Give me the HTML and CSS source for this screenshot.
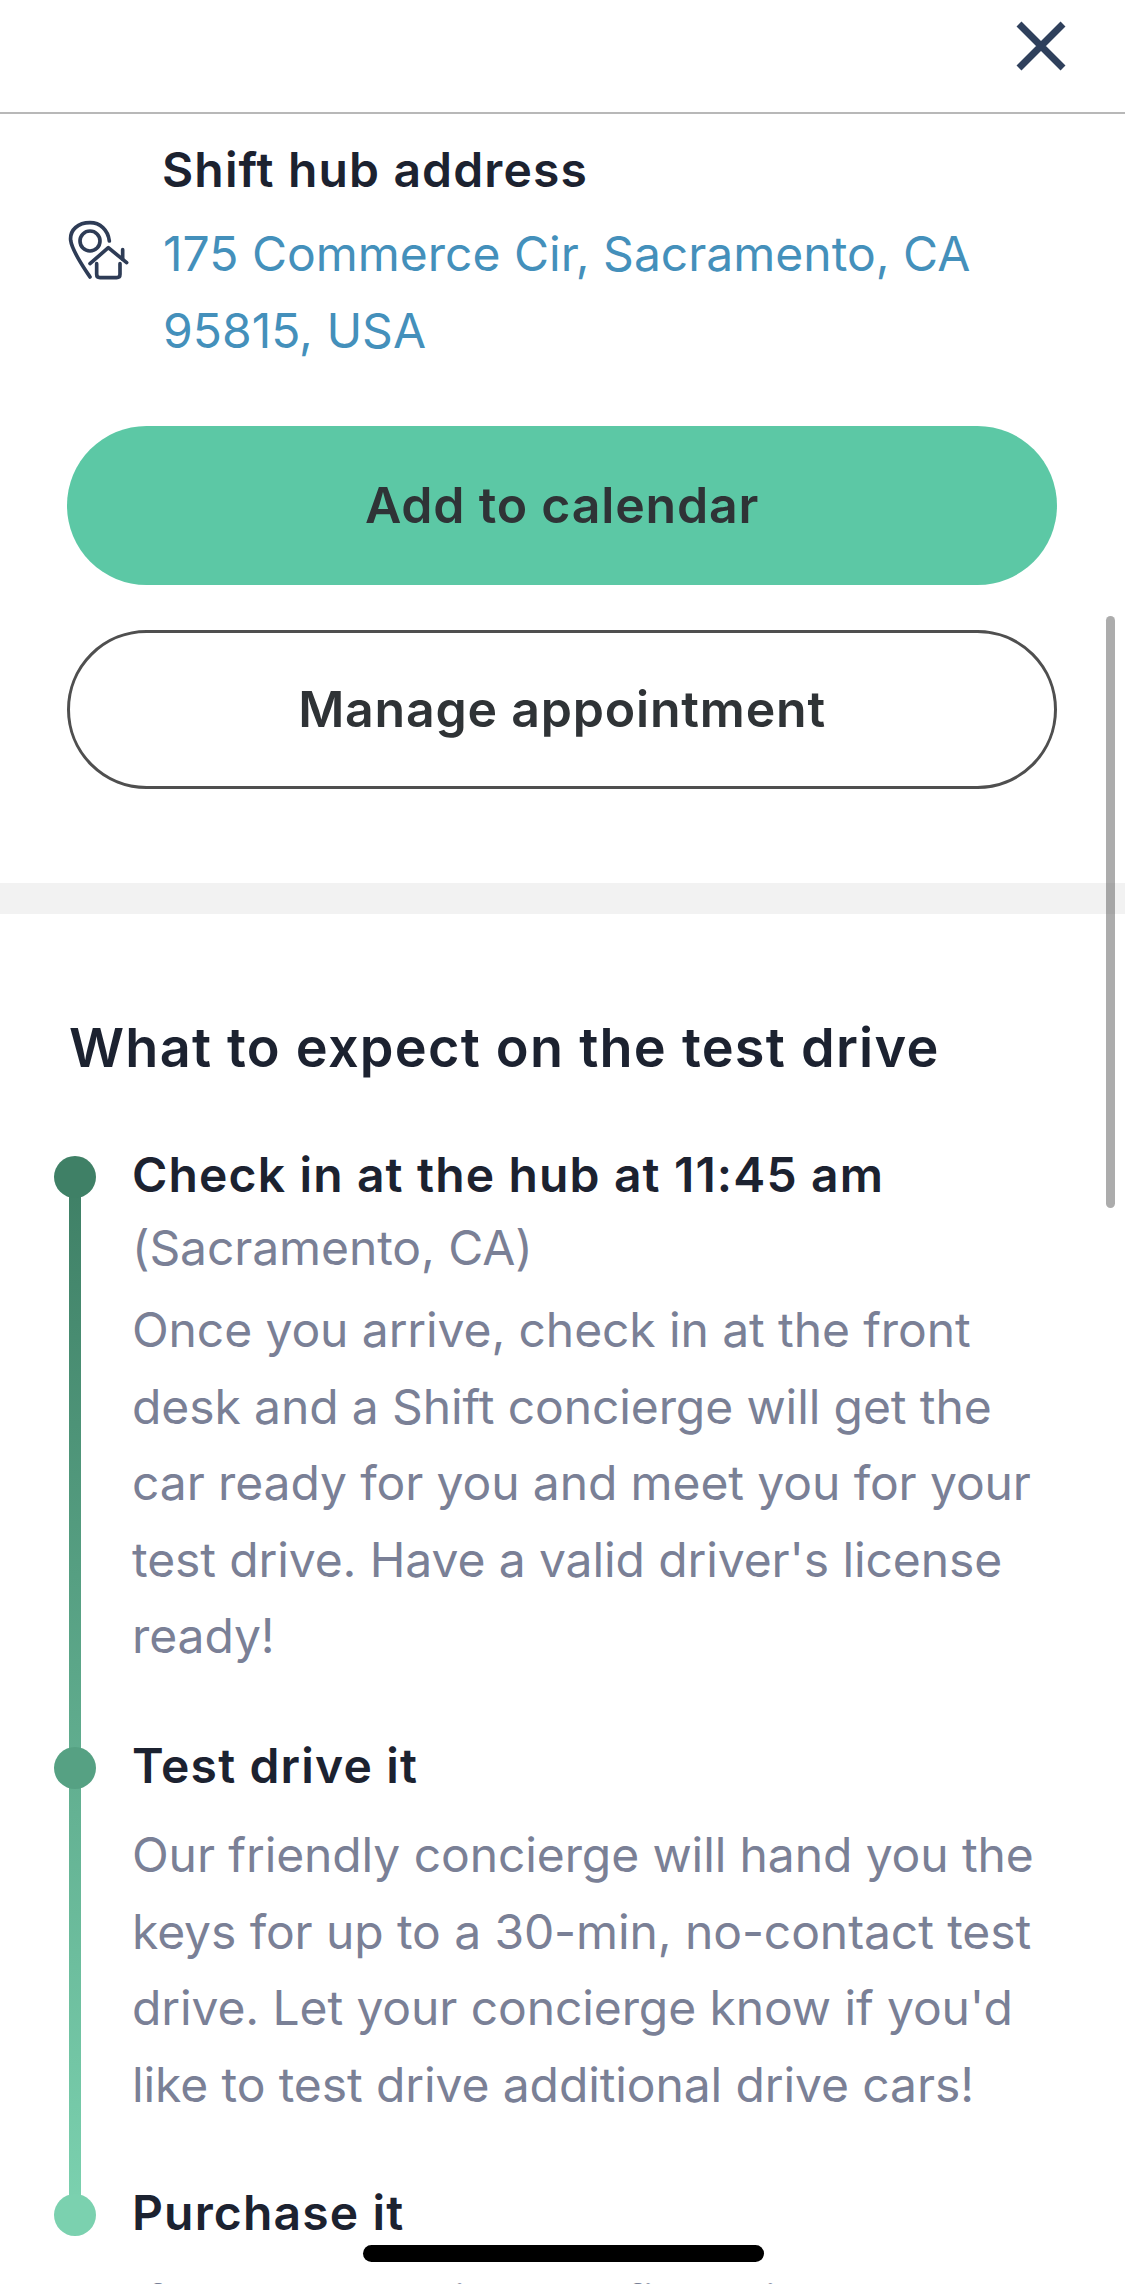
FILE: index.html
```html
<!DOCTYPE html>
<html lang="en">
<head>
    <meta charset="UTF-8">
    <meta name="viewport" content="width=device-width, initial-scale=1.0">
    <title>Test drive appointment</title>
    <link rel="stylesheet" href="styles.css">
</head>
<body>
    <header class="topo">
        <button class="btnFechar" aria-label="Close">
            <svg width="60" height="60" viewBox="0 0 60 60">
                <path d="M8 8 L52 52 M52 8 L8 52" stroke="#2f405c" stroke-width="7" fill="none"/>
            </svg>
        </button>
    </header>

    <main>
        <section class="caixaEndereco">
            <div class="endereco">
                <svg class="iconeEndereco" width="120" height="120" viewBox="0 0 360 360" fill="none" stroke="#2e3c56" stroke-width="11" stroke-linecap="round" stroke-linejoin="round">
                    <path d="M150 258 C128 225 96 180 92 148 C89 116 115 95 150 95 C180 95 204 116 208 150"/>
                    <circle cx="150" cy="150" r="30"/>
                    <path d="M150 218 L205 170 L260 215"/>
                    <path d="M248 176 V205"/>
                    <path d="M170 218 V250 Q170 260 180 260 H230 Q240 260 240 250 V218"/>
                </svg>
                <div>
                    <h3 class="tituloEndereco">Shift hub address</h3>
                    <a class="linkEndereco">175 Commerce Cir, Sacramento, CA 95815, USA</a>
                </div>
            </div>
            <div class="botoes">
                <button class="btn btnVerde">Add to calendar</button>
                <button class="btn btnBorda">Manage appointment</button>
            </div>
        </section>

        <div class="faixa"></div>

        <section class="caixaPassos">
            <h2 class="tituloPassos">What to expect on the test drive</h2>
            <div class="passos">
                <div class="linha"></div>
                <div class="passo passo1">
                    <span class="ponto ponto1"></span>
                    <h4>Check in at the hub at 11:45 am</h4>
                    <p class="local">(Sacramento, CA)</p>
                    <p>Once you arrive, check in at the front desk and a Shift concierge will get the car ready for you and meet you for your test drive. Have a valid driver's license ready!</p>
                </div>
                <div class="passo passo2">
                    <span class="ponto ponto2"></span>
                    <h4>Test drive it</h4>
                    <p>Our friendly concierge will hand you the keys for up to a 30-min, no-contact test drive. Let your concierge know if you'd like to test drive additional drive cars!</p>
                </div>
                <div class="passo passo3">
                    <span class="ponto ponto3"></span>
                    <h4>Purchase it</h4>
                    <p>If you agree, sign our financing</p>
                </div>
            </div>
        </section>
    </main>

    <div class="barraRolagem"></div>
    <div class="barraHome"></div>
</body>
</html>
```

FILE: styles.css
```css
* {
    padding: 0;
    margin: 0;
    border: none;
    box-sizing: border-box;
}
html, body {
    width: 1125px;
    height: 2284px;
    overflow: hidden;
    background-color: #fff;
}
body {
    position: relative;
    font-family: "Inter", "Liberation Sans", sans-serif;
    color: #1c2230;
}
.topo {
    display: flex;
    justify-content: flex-end;
    align-items: flex-start;
    height: 114px;
    padding: 16px 54px 0 0;
    border-bottom: 2px solid #b8b8b8;
}
.btnFechar {
    width: 60px;
    height: 60px;
    background: none;
}
.caixaEndereco {
    padding: 26px 68px 0 40px;
}
.endereco {
    display: flex;
    align-items: center;
}
.iconeEndereco {
    flex-shrink: 0;
    margin-right: 3px;
    margin-bottom: 8px;
}
.tituloEndereco {
    margin-left: -1px;
    font-size: 48px;
    font-weight: 600;
    letter-spacing: 1.15px;
    line-height: 60px;
    margin-bottom: 16px;
}
.linkEndereco {
    display: block;
    font-size: 48px;
    font-weight: 400;
    line-height: 76.5px;
    color: #4490bb;
}
.botoes {
    display: flex;
    flex-direction: column;
    gap: 45px;
    margin: 57px 0 0 27px;
}
.btn {
    width: 990px;
    height: 159px;
    padding-bottom: 2px;
    border-radius: 80px;
    font-family: inherit;
    font-size: 50px;
    font-weight: 600;
    letter-spacing: 0.8px;
    color: #2f3336;
    cursor: pointer;
}
.btnVerde {
    background-color: #5cc8a5;
}
.btnBorda {
    background-color: #fff;
    border: 3px solid #4f4f4f;
}
.faixa {
    height: 31px;
    margin-top: 94px;
    background-color: #f2f2f2;
}
.caixaPassos {
    padding: 95px 70px 0 70px;
}
.tituloPassos {
    margin-left: -1px;
    font-size: 54px;
    font-weight: 600;
    letter-spacing: 1.25px;
    line-height: 78px;
}
.passos {
    position: relative;
    margin-top: 58px;
    padding-left: 62px;
    margin-right: -10px;
}
.linha {
    position: absolute;
    left: -1px;
    top: 40px;
    width: 12px;
    height: 1020px;
    background: linear-gradient(#3f8066, #7bd1af);
}
.passo {
    position: relative;
}
.passo h4 {
    font-size: 48px;
    font-weight: 600;
    letter-spacing: 1.15px;
    line-height: 60px;
}
.passo p {
    font-size: 48px;
    letter-spacing: -0.1px;
    line-height: 76.5px;
    color: #7a8096;
}
.passo p.local {
    margin-bottom: 6px;
}
.passo1 h4 {
    margin-bottom: 4.5px;
}
.passo2 {
    margin-top: 61.5px;
}
.passo2 h4 {
    margin-bottom: 21px;
}
.passo3 {
    margin-top: 60px;
}
.passo3 h4 {
    margin-bottom: 21px;
}
.ponto {
    position: absolute;
    left: -78px;
    top: 11px;
    width: 42px;
    height: 42px;
    border-radius: 50%;
}
.ponto1 {
    background-color: #3f8066;
}
.ponto2 {
    background-color: #56a183;
}
.ponto3 {
    background-color: #7bd1af;
}
.barraRolagem {
    position: absolute;
    left: 1106px;
    top: 616px;
    width: 9px;
    height: 592px;
    border-radius: 5px;
    background-color: rgba(90, 90, 90, 0.5);
}
.barraHome {
    position: absolute;
    left: 363px;
    top: 2245px;
    width: 401px;
    height: 17px;
    border-radius: 9px;
    background-color: #000;
}
```
